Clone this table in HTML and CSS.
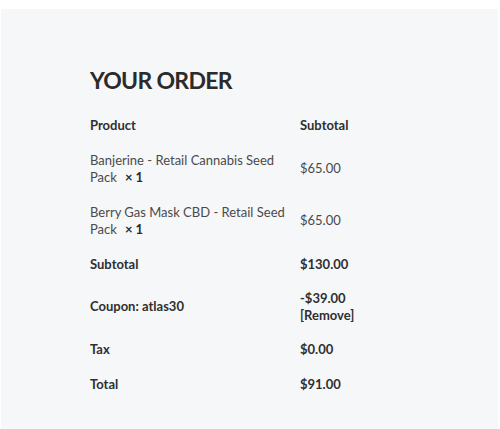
FILE: index.html
```html
<!DOCTYPE html>
<html lang="en">
<head>
    <meta charset="UTF-8">
    <title>Your order</title>
    <link rel="stylesheet" href="styles.css">
</head>
<body>
    <div class="order-box">
        <h3 class="order-title">YOUR ORDER</h3>
        <table class="order-table">
            <thead>
                <tr>
                    <th class="col-name">Product</th>
                    <th class="col-total">Subtotal</th>
                </tr>
            </thead>
            <tbody>
                <tr class="cart-item">
                    <td class="col-name">Banjerine - Retail Cannabis Seed Pack<strong class="qty">&times;&nbsp;1</strong></td>
                    <td class="col-total">$65.00</td>
                </tr>
                <tr class="cart-item">
                    <td class="col-name">Berry Gas Mask CBD - Retail Seed Pack<strong class="qty">&times;&nbsp;1</strong></td>
                    <td class="col-total">$65.00</td>
                </tr>
            </tbody>
            <tfoot>
                <tr>
                    <th>Subtotal</th>
                    <td>$130.00</td>
                </tr>
                <tr>
                    <th>Coupon: atlas30</th>
                    <td>-$39.00 <a href="#" class="remove-coupon">[Remove]</a></td>
                </tr>
                <tr>
                    <th>Tax</th>
                    <td>$0.00</td>
                </tr>
                <tr>
                    <th>Total</th>
                    <td>$91.00</td>
                </tr>
            </tfoot>
        </table>
    </div>
</body>
</html>
```

FILE: styles.css
```css
* {
    box-sizing: border-box;
}

body {
    margin: 0;
    background: #fff;
    font-family: Lato, "Open Sans", sans-serif;
    color: #2f2f2f;
}

.order-box {
    margin: 9px 2px 0 1px;
    min-height: 420px;
    background: #f6f7f9;
    padding: 57px 89px 30px;
}

.order-title {
    margin: 0 0 12px;
    font-size: 23px;
    line-height: 29px;
    font-weight: 700;
    letter-spacing: -0.7px;
    color: #2b2b2b;
}

.order-table {
    width: 320px;
    border-collapse: collapse;
    font-size: 13px;
    line-height: 16.5px;
}

.order-table th,
.order-table td {
    text-align: left;
    vertical-align: middle;
    padding: 9.5px 0;
}

.order-table tfoot th,
.order-table tfoot td {
    padding: 9px 0;
}

.order-table th {
    font-weight: 700;
}

.order-table .col-name,
.order-table tfoot th {
    width: 210px;
    padding-right: 10px;
}

.cart-item td {
    font-weight: 400;
    color: #4a4a4a;
}

.qty {
    margin-left: 8px;
    font-weight: 700;
    color: #2b2b2b;
}

.order-table tfoot td {
    font-weight: 700;
}

.remove-coupon {
    display: block;
    color: #2f2f2f;
    text-decoration: none;
}
```
